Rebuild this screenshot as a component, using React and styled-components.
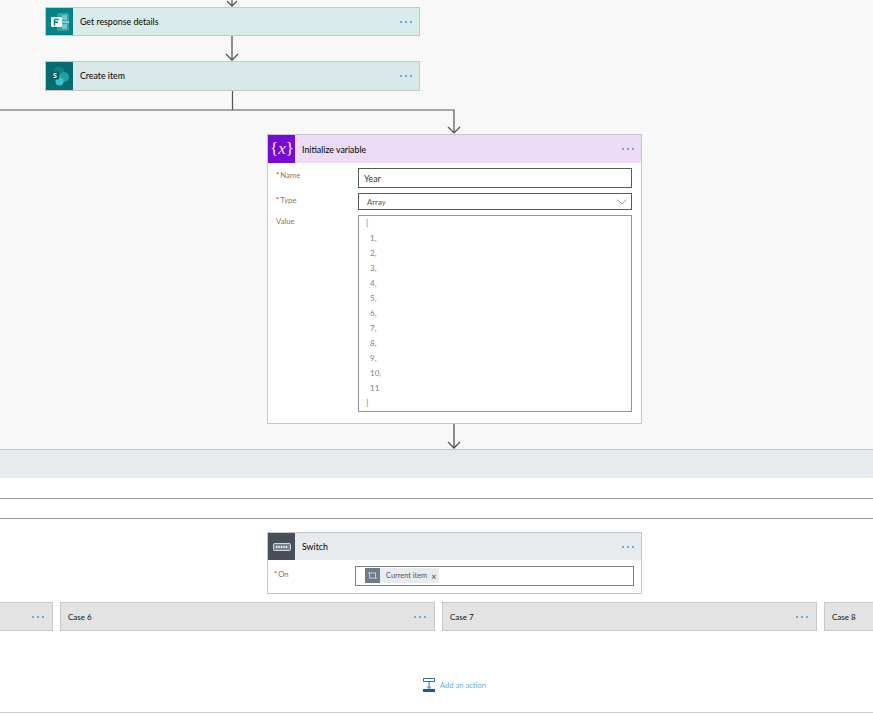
import React from "react";
import styled, { createGlobalStyle } from "styled-components";

const Global = createGlobalStyle`
  html, body { margin: 0; padding: 0; background: #fff; }
  body { font-family: Lato, "Open Sans", "Liberation Sans", sans-serif; }
`;

const Page = styled.div`
  width: 873px; height: 714px; overflow: hidden; display: flex; flex-direction: column; background: #fff;
`;
const Canvas = styled.section`
  height: 449px; flex: none; background: #f8f8f8; display: flex; flex-direction: column;
`;
const Column = styled.div`
  width: 375px; margin-left: ${p => p.$left}px; display: flex; flex-direction: column; flex: none;
`;
const ConnectorBox = styled.svg`
  display: block; flex: none; width: ${p => p.$w}px; height: ${p => p.$h}px;
`;
const Card = styled.div`
  width: 375px; box-sizing: border-box; border: 1px solid #c6c6c6; background: #fff; flex: none;
  ${p => p.$height ? `height: ${p.$height}px;` : ""}
`;
const Header = styled.div`
  height: ${p => p.$h || 28}px; display: flex; align-items: center; background: ${p => p.$bg};
`;
const IconBox = styled.div`
  width: 27px; height: 100%; flex: none; background: ${p => p.$bg}; display: flex; align-items: center; justify-content: center;
`;
const Title = styled.div`
  flex: 1; margin-left: 7px; padding-top: ${p => p.$drop || 0}px; font-size: 8.8px; line-height: 12px; color: #000;
`;
const Dots = styled.div`
  display: flex; gap: 3px; margin-right: ${p => p.$right || 7}px;
`;
const Dot = styled.i`
  width: 2px; height: 2px; background: #3f97e0; display: block; border-radius: 1px;
`;
const Form = styled.div`
  display: grid; grid-template-columns: 82px 274px; padding: 5px 9px 0 8px; row-gap: 5px;
`;
const Label = styled.div`
  font-size: 7.7px; line-height: 12px; color: #8f7560; margin-top: ${p => p.$top ?? 1}px;
`;
const Star = styled.span`
  color: #c4432c; margin-right: 1px;
`;
const Field = styled.div`
  box-sizing: border-box; height: ${p => p.$h}px; border: 1px solid #5a5a5a; background: #fff; display: flex; align-items: center;
  justify-content: space-between; padding: 0 4px 0 ${p => p.$pad}px; font-size: ${p => p.$size}px; color: ${p => p.$color};
`;
const ValueBox = styled.div`
  box-sizing: border-box; height: 197px; border: 1px solid #929292;
  display: flex; flex-direction: column; font-size: 8px; color: #808080;
`;
const CodeLine = styled.div`
  height: 15px; line-height: 15px; padding-left: ${p => p.$indent}px; flex: none;
`;
const Band = styled.div`
  height: 28px; flex: none; background: #e8ebee; border-top: 1px solid #c4c4c4;
`;
const Rule = styled.div`
  height: 1px; flex: none; background: ${p => p.$c || "#999"}; margin-top: ${p => p.$top}px;
`;
const SwitchWrap = styled.div`
  margin: 13px 0 0 267px; flex: none;
`;
const SwitchBody = styled.div`
  display: flex; height: 34px; padding: 6px 7px 0 6px;
`;
const OnLabel = styled(Label)`
  width: 81px; flex: none; color: #7a6a60; margin-top: 2px;
`;
const TokenInput = styled.div`
  box-sizing: border-box; width: 280px; height: 20px; border: 1px solid #7f7f7f; padding: 1px 9px; display: flex;
`;
const Token = styled.div`
  height: 15px; background: #e9ecef; display: flex; align-items: center; font-size: 7.4px; color: #555;
`;
const TokenIcon = styled.div`
  width: 15px; height: 15px; background: #6e7b8b; display: flex; align-items: center; justify-content: center; margin-right: 6px;
`;
const TokenClose = styled.span`
  margin: 1px 3px 0 4px; font-size: 9px; color: #444;
`;
const CaseRow = styled.div`
  display: flex; gap: 7px; margin: 8px 0 0 -322px; flex: none;
`;
const CaseCard = styled.div`
  box-sizing: border-box; width: 375px; height: 29px; flex: none; background: #e3e3e3; border: 1px solid #c8c8c8;
  display: flex; align-items: center; padding-left: 7px; font-size: 8px; color: #111;
`;
const CaseName = styled.span`
  flex: 1;
`;
const AddAction = styled.div`
  display: flex; align-items: center; gap: 5px; margin: 47px 0 0 423px; height: 14px; flex: none;
  color: #6aaee8; font-size: 7.6px; line-height: 12px;
`;
const AddText = styled.span`
  margin-top: 0;
`;
const ArrowRow = styled.div`
  display: flex; justify-content: center; flex: none; height: ${p => p.$h}px; margin-left: -1px;
`;

const Arrow = ({ h }) => (
  <ConnectorBox $w={24} $h={h} viewBox={`0 0 24 ${h}`}>
    <path d={`M12 0V${h - 1}M6 ${h - 7}L12 ${h - 1}L18 ${h - 7}`} fill="none" stroke="#555" strokeWidth="1.3" />
  </ConnectorBox>
);

const More = ({ right }) => (
  <Dots $right={right}><Dot /><Dot /><Dot /></Dots>
);

const FormsIcon = () => (
  <svg width="20" height="20" viewBox="0 0 20 20">
    <rect x="7" y="1" width="12" height="18" rx="1.5" fill="#37a0a2" />
    <rect x="12" y="3" width="5" height="5" fill="#7cc4c5" />
    <rect x="12" y="12" width="5" height="5" fill="#7cc4c5" />
    <rect x="1" y="5" width="11" height="10" rx="1" fill="#f4fbfb" />
    <path d="M4.5 7.5h4.2M4.5 7.5v6M4.5 10.2h3.5" stroke="#038387" strokeWidth="1.5" fill="none" />
    <path d="M12 10h7" stroke="#e8f5f5" strokeWidth="1" />
  </svg>
);
const SharePointIcon = () => (
  <svg width="22" height="22" viewBox="0 0 22 22">
    <circle cx="10" cy="7" r="5.5" fill="#0f7f83" />
    <circle cx="15" cy="12" r="5" fill="#1fa0a5" />
    <circle cx="10.5" cy="16.5" r="4" fill="#37c6d0" />
    <rect x="2" y="6.500" width="8" height="8" rx="1" fill="#0b5f62" />
    <text x="6" y="13" fontSize="7" fontWeight="700" fill="#fff" textAnchor="middle" fontFamily="Open Sans">S</text>
  </svg>
);
const VarIcon = () => (
  <svg width="26" height="24" viewBox="0 0 26 24">
    <text x="13" y="17" fill="#f2e8fb" fontSize="17" textAnchor="middle" fontFamily="Liberation Serif" fontStyle="italic">
      <tspan fontStyle="normal">{"{"}</tspan>x<tspan fontStyle="normal">{"}"}</tspan>
    </text>
  </svg>
);
const SwitchIcon = () => (
  <svg width="18" height="8" viewBox="0 0 18 8">
    <rect x="0.5" y="0.5" width="17" height="7" rx="1" fill="#7d848e" stroke="#d4d7db" />
    <path d="M3 4h12" stroke="#f0f1f3" strokeWidth="2" strokeDasharray="1.4 1" />
  </svg>
);
const TokenGlyph = () => (
  <svg width="9" height="7" viewBox="0 0 9 7">
    <rect x="1.5" y="1" width="6" height="5" fill="none" stroke="#c5ccd3" />
    <path d="M0 1h2M7 6h2" stroke="#c5ccd3" />
  </svg>
);
const AddIcon = () => (
  <svg width="12" height="14" viewBox="0 0 12 14">
    <path d="M0.5 0.5h11v3h-11zM6 3.500v7M4 8.500l2 2 2-2" fill="none" stroke="#2b72bd" strokeWidth="1" />
    <rect x="0" y="11" width="12" height="3" fill="#0f5cad" />
  </svg>
);

const codeLines = ["[", "1,", "2,", "3,", "4,", "5,", "6,", "7,", "8,", "9,", "10,", "11", "]"];

export default function App() {
  return (
    <Page>
      <Global />
      <Canvas>
        <Column $left={45}>
          <ArrowRow $h={7}>
            <ConnectorBox $w={24} $h={7} viewBox="0 0 24 7">
              <path d="M12 0V6M7 1L12 6L17 1" fill="none" stroke="#555" strokeWidth="1.3" />
            </ConnectorBox>
          </ArrowRow>
          <Card $height={29}>
            <Header $bg="#d9ecec" $h={27}>
              <IconBox $bg="#038387"><FormsIcon /></IconBox>
              <Title>Get response details</Title>
              <More />
            </Header>
          </Card>
          <ArrowRow $h={25}><Arrow h={25} /></ArrowRow>
          <Card $height={30}>
            <Header $bg="#d9e8e8" $h={28}>
              <IconBox $bg="#036c70"><SharePointIcon /></IconBox>
              <Title>Create item</Title>
              <More />
            </Header>
          </Card>
        </Column>
        <ConnectorBox $w={873} $h={43} viewBox="0 0 873 43">
          <path d="M232.500 0V19M0 19H454V42M448 36L454 42L460 36" fill="none" stroke="#555" strokeWidth="1.2" />
        </ConnectorBox>
        <Column $left={267}>
          <Card $height={290}>
            <Header $bg="#ecdcf7">
              <IconBox $bg="#770bd6"><VarIcon /></IconBox>
              <Title $drop={1}>Initialize variable</Title>
              <More />
            </Header>
            <Form>
              <Label><Star>*</Star>Name</Label>
              <Field $h={20} $size={8.8} $color="#333" $pad={5}>Year</Field>
              <Label><Star>*</Star>Type</Label>
              <Field $h={17} $size={7.8} $color="#555" $pad={8}>
                Array
                <svg width="10" height="6" viewBox="0 0 10 6"><path d="M0.500 0.500L5 5L9.500 0.500" fill="none" stroke="#999" /></svg>
              </Field>
              <Label $top={0}>Value</Label>
              <ValueBox>
                {codeLines.map((l, i) => (
                  <CodeLine key={i} $indent={l === "[" || l === "]" ? 7 : 11}>{l}</CodeLine>
                ))}
              </ValueBox>
            </Form>
          </Card>
        </Column>
        <ConnectorBox $w={873} $h={25} viewBox="0 0 873 25">
          <path d="M454 0V24M448 18L454 24L460 18" fill="none" stroke="#555" strokeWidth="1.3" />
        </ConnectorBox>
      </Canvas>
      <Band />
      <Rule $top={20} />
      <Rule $top={19} />
      <SwitchWrap>
        <Card $height={62}>
          <Header $bg="#e8ebee" $h={27}>
            <IconBox $bg="#474f5b"><SwitchIcon /></IconBox>
            <Title>Switch</Title>
            <More />
          </Header>
          <SwitchBody>
            <OnLabel><Star>*</Star>On</OnLabel>
            <TokenInput>
              <Token>
                <TokenIcon><TokenGlyph /></TokenIcon>
                Current item
                <TokenClose>×</TokenClose>
              </Token>
            </TokenInput>
          </SwitchBody>
        </Card>
      </SwitchWrap>
      <CaseRow>
        <CaseCard><CaseName /><More right={8} /></CaseCard>
        <CaseCard><CaseName>Case 6</CaseName><More right={8} /></CaseCard>
        <CaseCard><CaseName>Case 7</CaseName><More right={8} /></CaseCard>
        <CaseCard><CaseName>Case 8</CaseName></CaseCard>
      </CaseRow>
      <AddAction>
        <AddIcon />
        <AddText>Add an action</AddText>
      </AddAction>
      <Rule $top={20} $c="#cccccc" />
    </Page>
  );
}
